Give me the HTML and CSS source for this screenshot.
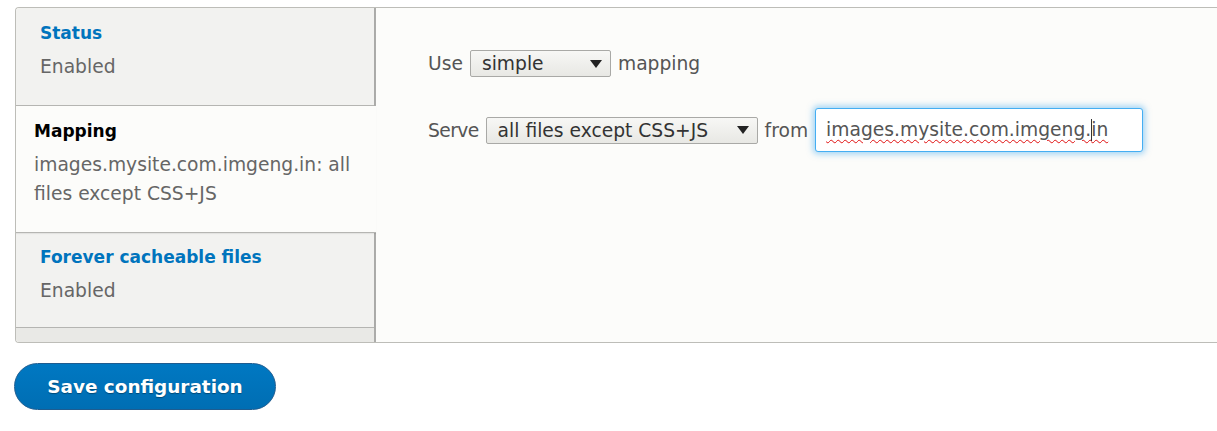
FILE: index.html
```html
<!DOCTYPE html>
<html>
<head>
<meta charset="utf-8">
<link rel="stylesheet" href="styles.css">
</head>
<body>
<div class="page">
  <div class="vtabs">
    <ul class="vtabs-menu">
      <li class="tab tab-status">
        <a class="tab-title">Status</a>
        <span class="tab-summary">Enabled</span>
      </li>
      <li class="tab is-selected">
        <a class="tab-title">Mapping</a>
        <span class="tab-summary">images.mysite.com.imgeng.in: all files except CSS+JS</span>
      </li>
      <li class="tab tab-forever">
        <a class="tab-title">Forever cacheable files</a>
        <span class="tab-summary">Enabled</span>
      </li>
      <li class="menu-end"></li>
    </ul>
    <div class="vtabs-pane">
      <div class="row row-use">
        <span class="label">Use</span>
        <div class="select select-simple">
          <span class="select-text">simple</span>
          <svg class="arrow" width="12" height="8" viewBox="0 0 12 8"><path d="M0 0 H12 L6 8 Z" fill="#222"/></svg>
        </div>
        <span class="label">mapping</span>
      </div>
      <div class="row row-serve">
        <span class="label label-serve">Serve</span>
        <div class="select select-files">
          <span class="select-text">all files except CSS+JS</span>
          <svg class="arrow" width="12" height="8" viewBox="0 0 12 8"><path d="M0 0 H12 L6 8 Z" fill="#222"/></svg>
        </div>
        <span class="label">from</span>
        <div class="text-input"><span class="typed">images.mysite.com.imgeng.<span class="caret"></span>in</span></div>
      </div>
    </div>
  </div>
  <button class="btn-primary" type="button">Save configuration</button>
</div>
</body>
</html>
```

FILE: styles.css
```css
html, body {
  margin: 0;
  padding: 0;
  background: #ffffff;
  overflow: hidden;
}

body {
  font-family: "DejaVu Sans", "Liberation Sans", sans-serif;
  font-size: 18.7px;
  color: #555555;
}

.page {
  padding: 7px 0 0 15px;
}

.vtabs {
  display: flex;
  width: 1240px;
  height: 334px;
  border: 1px solid #bdbdb8;
  border-right: none;
  border-radius: 4px 0 0 4px;
  background: #fcfcfa;
  overflow: hidden;
}

.vtabs-menu {
  list-style: none;
  margin: 0;
  padding: 0;
  width: 358px;
  flex: none;
  display: flex;
  flex-direction: column;
  background: #f2f2f0;
  border-right: 2px solid #acacaa;
}

.tab {
  padding: 11px 12px 0 24px;
  border-bottom: 1px solid #b5b5b2;
  box-shadow: 0 1px 1px rgba(0, 0, 0, 0.06);
}

.tab-status {
  height: 86px;
}

.tab.is-selected {
  padding-left: 18px;
  height: 115px;
  background: #fcfcfa;
  margin-right: -2px;
}

.tab-forever {
  padding-top: 10px;
  height: 84px;
}

.tab-title {
  display: block;
  font-weight: bold;
  font-size: 17px;
  line-height: 29px;
  color: #0074bd;
}

.is-selected .tab-title {
  color: #000000;
}

.tab-summary {
  display: block;
  margin-top: 4px;
  line-height: 29px;
  color: #666666;
}

.menu-end {
  flex: 1;
  background: #e9e9e6;
}

.vtabs-pane {
  flex: 1;
  padding: 42px 0 0 52px;
}

.row {
  display: flex;
  align-items: center;
  gap: 7px;
}

.row-use {
  height: 27px;
  margin-bottom: 31px;
}

.row-serve {
  height: 44px;
}

.label {
  color: #555555;
}

.label-serve {
  letter-spacing: -0.6px;
}

.select {
  box-sizing: border-box;
  height: 27px;
  display: flex;
  align-items: center;
  justify-content: space-between;
  padding: 0 8px 0 11px;
  border: 1px solid #a9a9a6;
  border-radius: 2px;
  background: linear-gradient(to bottom, #f7f7f5, #e8e8e4);
  color: #333333;
}

.select-simple {
  width: 141px;
}

.select-files {
  width: 272px;
}

.select-text {
  line-height: 25px;
}

.arrow {
  flex: none;
}

.text-input {
  box-sizing: border-box;
  width: 328px;
  height: 44px;
  padding: 0 10px;
  display: flex;
  align-items: center;
  background: #ffffff;
  border: 1px solid #45aef2;
  border-radius: 3px;
  box-shadow: 0 0 6px 2px rgba(64, 170, 240, 0.5);
  color: #555555;
}

.typed {
  text-decoration: underline wavy #e01010;
  text-decoration-thickness: 1px;
  text-underline-offset: 3px;
}

.caret {
  display: inline-block;
  width: 1px;
  height: 22px;
  margin-right: -1px;
  vertical-align: -5px;
  background: #333333;
}

.btn-primary {
  display: block;
  margin: 20px 0 0 -1px;
  width: 262px;
  height: 47px;
  border: 1px solid #1e5c90;
  border-radius: 24px;
  background: linear-gradient(to bottom, #0078c2, #006eb3);
  color: #ffffff;
  font-family: "DejaVu Sans", "Liberation Sans", sans-serif;
  font-weight: bold;
  font-size: 18.4px;
  text-shadow: 0 1px 1px rgba(0, 0, 0, 0.35);
  padding: 0;
  cursor: pointer;
}
```
